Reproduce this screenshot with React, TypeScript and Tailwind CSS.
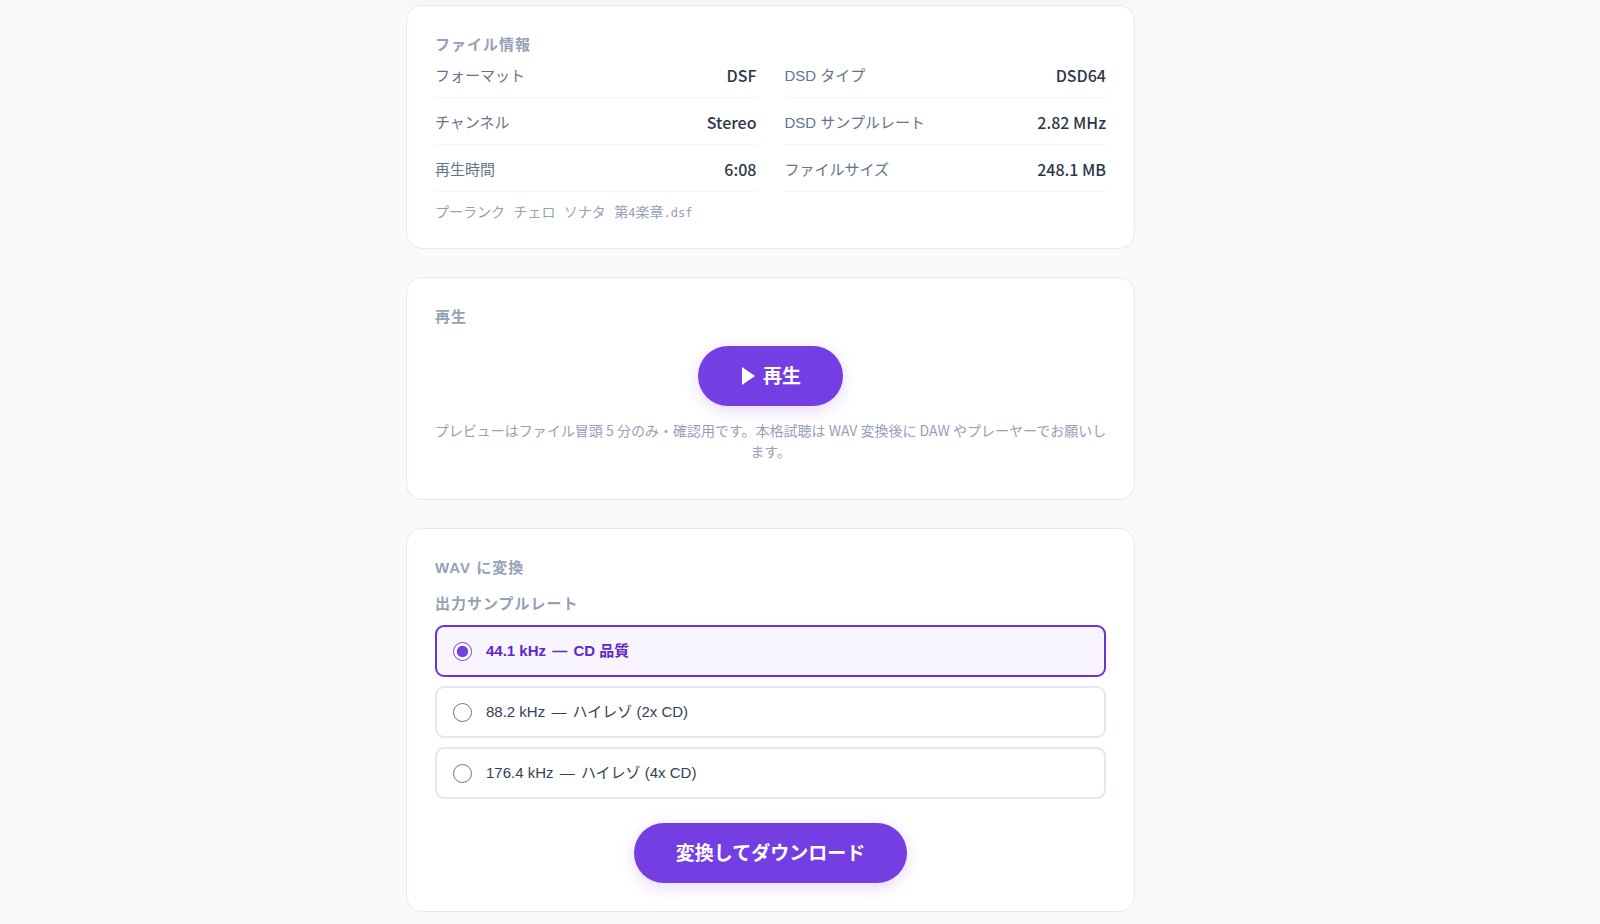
import { useState } from 'react'
import type { ReactNode } from 'react'

const FILE_INFO = [
  { label: 'フォーマット', value: 'DSF' },
  { label: 'DSD タイプ', value: 'DSD64' },
  { label: 'チャンネル', value: 'Stereo' },
  { label: 'DSD サンプルレート', value: '2.82 MHz' },
  { label: '再生時間', value: '6:08' },
  { label: 'ファイルサイズ', value: '248.1 MB' },
]

const SAMPLE_RATES = [
  { id: '44100', rate: '44.1 kHz', note: 'CD 品質' },
  { id: '88200', rate: '88.2 kHz', note: 'ハイレゾ (2x CD)' },
  { id: '176400', rate: '176.4 kHz', note: 'ハイレゾ (4x CD)' },
]

function Card({ title, children }: { title: string; children: ReactNode }) {
  return (
    <section className="rounded-2xl border border-[#e5e9f1] bg-white p-7">
      <h2 className="text-[15px] leading-[22px] font-bold tracking-[1px] text-[#94a1b6]">
        {title}
      </h2>
      {children}
    </section>
  )
}

function PillButton({ icon, label }: { icon?: ReactNode; label: string }) {
  return (
    <button
      type="button"
      className="flex h-[60px] cursor-pointer items-center gap-2 rounded-full bg-[#753ee3] px-[42px] text-[19px] font-bold text-white shadow-[0_4px_16px_rgba(117,62,227,0.2)] transition hover:bg-[#6a31d9]"
    >
      {icon}
      <span className="pt-[3px]">{label}</span>
    </button>
  )
}

export default function App() {
  const [selected, setSelected] = useState('44100')

  return (
    <div className="min-h-screen bg-[linear-gradient(#f7f7f7,#fafafa_14px)] pt-[5px] pr-[59px] pb-[11px] font-['Liberation_Sans','Noto_Sans_CJK_JP',sans-serif]">
      <main className="mx-auto flex max-w-[729px] flex-col gap-7" lang="ja">
        <Card title="ファイル情報">
          <dl className="grid grid-cols-2 gap-x-7 gap-y-[5px]">
            {FILE_INFO.map((item) => (
              <div
                key={item.label}
                className="flex h-[42px] items-center justify-between border-b border-[#f0f4f9]"
              >
                <dt className="text-[15px] text-[#64748b]">{item.label}</dt>
                <dd className="pb-[3px] font-['Noto_Sans_CJK_JP',sans-serif] text-base font-medium text-[#2d3748]">
                  {item.value}
                </dd>
              </div>
            ))}
          </dl>
          <p className="mt-[14px] font-['Liberation_Mono','Noto_Sans_CJK_JP',monospace] text-[14px] leading-[14px] text-[#94a1b6]">
            プーランク チェロ ソナタ 第
            <span className="font-['DejaVu_Sans_Mono',monospace] text-xs leading-[14px]">4</span>
            楽章
            <span className="font-['DejaVu_Sans_Mono',monospace] text-xs leading-[14px]">.dsf</span>
          </p>
        </Card>

        <Card title="再生">
          <div className="mt-[18px] flex justify-center">
            <PillButton
              icon={
                <svg className="h-[18px] w-[15px]" viewBox="0 0 15 18" fill="currentColor" aria-hidden>
                  <path d="M2 0v18L15 9z" />
                </svg>
              }
              label="再生"
            />
          </div>
          <p className="-mx-1 mt-[14px] mb-[9px] text-center font-['Noto_Sans_CJK_JP',sans-serif] text-[14px] leading-[21px] text-[#94a1b6]">
            プレビューはファイル冒頭 5 分のみ・確認用です。本格試聴は WAV 変換後に DAW やプレーヤーでお願いします。
          </p>
        </Card>

        <Card title="WAV に変換">
          <fieldset className="mt-[14px]">
            <legend className="text-[15px] leading-[22px] font-bold tracking-[1px] text-[#94a1b6]">
              出力サンプルレート
            </legend>
            <div className="mt-[10px] flex flex-col gap-[9px]">
              {SAMPLE_RATES.map((option) => (
                <label
                  key={option.id}
                  htmlFor={`rate-${option.id}`}
                  className={`flex h-[52px] cursor-pointer items-center gap-[14px] rounded-[9px] border-2 px-4 text-[15px] ${
                    selected === option.id
                      ? 'border-[#6d31dc] bg-[#f8f5ff] font-bold text-[#6027cb]'
                      : 'border-[#e2e7f0] bg-white text-[#334155]'
                  }`}
                >
                  <input
                    id={`rate-${option.id}`}
                    type="radio"
                    name="rate"
                    value={option.id}
                    checked={selected === option.id}
                    onChange={() => setSelected(option.id)}
                    className="h-[19px] w-[19px] accent-[#753ee3]"
                  />
                  <span>
                    {option.rate} <span className="mx-[2px]">—</span> {option.note}
                  </span>
                </label>
              ))}
            </div>
          </fieldset>
          <div className="mt-6 flex justify-center">
            <PillButton label="変換してダウンロード" />
          </div>
        </Card>
      </main>
    </div>
  )
}
